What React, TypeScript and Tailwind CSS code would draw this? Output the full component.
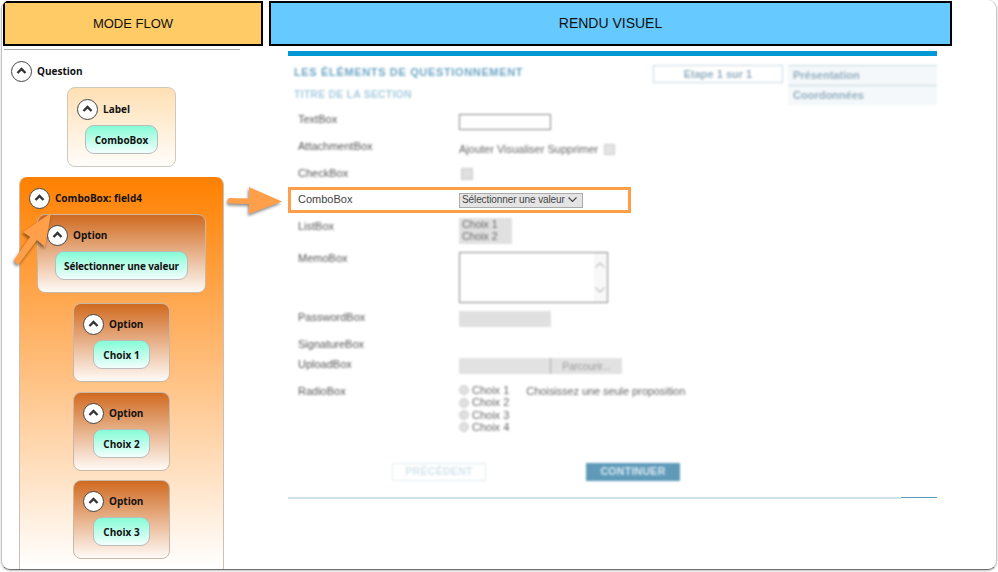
import React from 'react';

const nodeFont = { fontFamily: '"Open Sans", "Noto Sans", sans-serif' };

function Toggle() {
  return (
    <div className="flex h-[21px] w-[21px] shrink-0 items-center justify-center rounded-full border-[1.5px] border-[#444] bg-white">
      <svg width="11" height="8" viewBox="0 0 11 8">
        <path d="M1.5 6 L5.5 2 L9.5 6" fill="none" stroke="#333" strokeWidth="2.4" />
      </svg>
    </div>
  );
}

function NodeHead({ label }: { label: string }) {
  return (
    <div className="flex h-[22px] items-center gap-[5px]">
      <Toggle />
      <span className="text-[10px] font-bold text-[#111]">{label}</span>
    </div>
  );
}

function Pill({ label, w }: { label: string; w: string }) {
  return (
    <div className={`flex h-[29px] items-center justify-center rounded-[9px] border border-[#bbb] bg-linear-to-b/srgb from-[#85fcd6] to-[#f2fffc] pt-[2px] text-[10px] font-bold text-[#111] ${w}`}>
      {label}
    </div>
  );
}

function OptionCard({ label, mt }: { label: string; mt: string }) {
  return (
    <div className={`flex h-[79px] w-[97px] flex-col rounded-[8px] border border-[#c8b8a8] bg-linear-to-b/srgb from-[#d06a20] to-[#fffaf6] px-[9px] pt-[9px] ${mt}`}>
      <NodeHead label="Option" />
      <div className="mt-[5px] flex justify-center">
        <Pill label={label} w="w-[57px]" />
      </div>
    </div>
  );
}

function Row({ h, label, ctrlMt, children }: { h: string; label: string; ctrlMt: string; children?: React.ReactNode }) {
  return (
    <div className={`flex blur-[1.2px] ${h}`}>
      <div className="w-[171px] pl-[10px] text-[11px] leading-[14px] text-[#555]">{label}</div>
      <div className={ctrlMt}>{children}</div>
    </div>
  );
}

function Radio({ label }: { label: string }) {
  return (
    <div className="flex h-[12.4px] items-center gap-[3px] text-[11px] text-[#666]">
      <span className="h-[10px] w-[10px] rounded-full border border-[#ccc] bg-[#e0e0e0]" />
      {label}
    </div>
  );
}

export default function App() {
  return (
    <div className="relative h-[572px] w-[998px] overflow-hidden bg-white" style={{ fontFamily: '"Liberation Sans", Arial, sans-serif' }}>
      <div className="ml-[1px] h-[570px] w-[996px] overflow-hidden rounded-[9px] border-x border-b border-x-[#c4c4c4] border-b-[#707070] pt-[1px] shadow-[0_1px_2px_rgba(0,0,0,0.25)]">
        {/* Column titles */}
        <div className="ml-[1px] flex gap-[6px]">
          <div className="flex h-[45px] w-[260px] items-center justify-center border-2 border-black bg-[#ffcb66] text-[13px] text-[#111]">
            MODE FLOW
          </div>
          <div className="flex h-[45px] w-[683px] items-center justify-center border-2 border-black bg-[#66c9ff] pb-[1px] text-[14px] text-[#111]">
            RENDU VISUEL
          </div>
        </div>

        <div className="flex">
          {/* Flow tree */}
          <div className="ml-[2px] w-[236px] shrink-0" style={nodeFont}>
            <div className="mt-[3px] h-[11px] border-t border-[#aaa]" />
            <div className="ml-[7px]">
              <NodeHead label="Question" />
            </div>
            <div className="ml-[15px] mt-[5px] flex w-[205px] flex-col items-center">
              <div className="flex h-[80px] w-[109px] flex-col rounded-[8px] border border-[#cfc8bc] bg-linear-to-b/srgb from-[#ffe0b4] to-[#fffdfa] px-[9px] pt-[10px]">
                <NodeHead label="Label" />
                <div className="mt-[5px] flex justify-center">
                  <Pill label="ComboBox" w="w-[73px]" />
                </div>
              </div>
              <div className="mt-[10px] flex h-[400px] w-[205px] flex-col items-center rounded-t-[8px] border border-[#c9c0b6] border-t-0 bg-linear-to-b/srgb from-[#ff8000] to-white to-[98%] pt-[10px]">
                <div className="w-full pl-[9px]">
                  <NodeHead label="ComboBox: field4" />
                </div>
                <div className="mt-[5px] flex h-[79px] w-[169px] flex-col rounded-[8px] border border-[#c8b8a8] bg-linear-to-b/srgb from-[#d06a20] to-[#fffaf6] px-[9px] pt-[9px]">
                  <NodeHead label="Option" />
                  <div className="mt-[5px] flex justify-center tracking-[-0.17px]">
                    <Pill label="Sélectionner une valeur" w="w-[133px]" />
                  </div>
                </div>
                <OptionCard label="Choix 1" mt="mt-[10px]" />
                <OptionCard label="Choix 2" mt="mt-[10px]" />
                <OptionCard label="Choix 3" mt="mt-[9px]" />
              </div>
            </div>
          </div>

          {/* Visual rendering */}
          <div className="ml-[48px] w-[649px] shrink-0">
            <div className="mt-[5px] h-[5px] bg-[#0099d4]" />
            <div className="flex h-[56px] items-start pt-[9px] blur-[1.2px]">
              <div className="w-[365px] pl-[6px]">
                <div className="text-[11px] font-bold leading-[14px] tracking-[0.65px] text-[#6ea6c4]">LES ÉLÉMENTS DE QUESTIONNEMENT</div>
                <div className="mt-[8px] text-[10.5px] font-bold leading-[14px] tracking-[0.2px] text-[#a9cde0]">TITRE DE LA SECTION</div>
              </div>
              <div className="flex h-[18px] w-[130px] items-center justify-center border border-[#c8dae4] text-[11px] font-bold text-[#94aebf]">Etape 1 sur 1</div>
              <div className="ml-[5px] w-[149px] text-[11px] font-bold text-[#94aebf]">
                <div className="flex h-[21px] items-center border-b border-t border-[#c8dae4] bg-[#f4f8fa] pl-[5px]">Présentation</div>
                <div className="flex h-[19px] items-center bg-[#f4f8fa] pl-[5px]">Coordonnées</div>
              </div>
            </div>

            <Row h="h-[27px]" label="TextBox" ctrlMt="mt-[2px]">
              <div className="h-[16px] w-[92px] border border-[#888]" />
            </Row>
            <Row h="h-[27px]" label="AttachmentBox" ctrlMt="mt-[3px]">
              <div className="flex items-center gap-[6px] text-[11px] leading-[14px] text-[#666]">
                Ajouter Visualiser Supprimer
                <span className="h-[11px] w-[11px] border border-[#ccc] bg-[#e4e4e4]" />
              </div>
            </Row>
            <Row h="h-[21px]" label="CheckBox" ctrlMt="mt-[2px] ml-[2px]">
              <div className="h-[12px] w-[12px] border border-[#ccc] bg-[#e0e0e0]" />
            </Row>

            {/* Highlighted row stays sharp */}
            <div className="flex h-[26px] w-[343px] items-center border-[3px] border-[#ff9f4a]">
              <div className="w-[168px] pb-[2px] pl-[7px] text-[11px] text-[#444]">ComboBox</div>
              <div className="flex h-[15px] w-[124px] items-center justify-between border border-[#aaa] bg-[#e4e4e4] pb-[1px] pl-[2px] pr-[5px] text-[10px] tracking-[-0.1px] text-[#444]">
                Sélectionner une valeur
                <svg width="9" height="6" viewBox="0 0 9 6">
                  <path d="M0.5 0.5 L4.5 4.5 L8.5 0.5" fill="none" stroke="#444" strokeWidth="1.1" />
                </svg>
              </div>
            </div>

            <div className="h-[6px]" />
            <Row h="h-[32px]" label="ListBox" ctrlMt="-mt-[1px]">
              <div className="h-[26px] w-[53px] bg-[#e0e0e0] pl-[3px] text-[10.5px] leading-[12px] text-[#666]">
                Choix 1
                <br />
                Choix 2
              </div>
            </Row>
            <Row h="h-[59px]" label="MemoBox" ctrlMt="mt-[1px]">
              <div className="flex h-[51px] w-[149px] justify-end border border-[#888] pr-[1px]">
                <div className="flex w-[12px] flex-col items-center justify-between bg-[#f8f8f8] py-[9px]">
                  <svg width="10" height="6" viewBox="0 0 10 6"><path d="M0.5 5.5 L5 1 L9.5 5.5" fill="none" stroke="#999" /></svg>
                  <svg width="10" height="6" viewBox="0 0 10 6"><path d="M0.5 0.5 L5 5 L9.5 0.5" fill="none" stroke="#999" /></svg>
                </div>
              </div>
            </Row>
            <Row h="h-[27px]" label="PasswordBox" ctrlMt="mt-[1px]">
              <div className="h-[16px] w-[92px] bg-[#e0e0e0]" />
            </Row>
            <Row h="h-[20px]" label="SignatureBox" ctrlMt="" />
            <Row h="h-[27px]" label="UploadBox" ctrlMt="mt-[1px]">
              <div className="flex h-[16px] w-[163px] bg-[#e2e2e2]">
                <div className="w-[92px] border-r border-[#aaa]" />
                <div className="flex flex-1 items-center justify-center text-[10px] text-[#999]">Parcourir...</div>
              </div>
            </Row>
            <Row h="h-[72px]" label="RadioBox" ctrlMt="">
              <div className="flex gap-[17px]">
                <div>
                  <Radio label="Choix 1" />
                  <Radio label="Choix 2" />
                  <Radio label="Choix 3" />
                  <Radio label="Choix 4" />
                </div>
                <div className="text-[11px] leading-[14px] tracking-[-0.06px] text-[#666]">Choisissez une seule proposition</div>
              </div>
            </Row>

            <div className="mt-[7px] flex h-[18px] gap-[100px] pl-[104px] blur-[1px]">
              <div className="flex w-[94px] items-center justify-center border border-[#e0ecf2] text-[10.5px] font-bold tracking-[0.3px] text-[#d4e4ec]">PRÉCÉDENT</div>
              <div className="flex w-[94px] items-center justify-center bg-[#5f9ab8] text-[10.5px] font-bold tracking-[0.3px] text-[#dcebf2]">CONTINUER</div>
            </div>

            <div className="mt-[16px] flex items-start">
              <div className="h-[2px] w-[613px] bg-[#cfe2ec]" />
              <div className="h-[1px] flex-1 bg-[#5f9ab8]" />
            </div>
          </div>
        </div>
      </div>

      {/* Callout arrows */}
      <svg className="absolute left-0 top-0" width="300" height="290" viewBox="0 0 300 290" style={{ filter: 'drop-shadow(-1px 2px 1.5px rgba(0,0,0,0.45))' }}>
        <path d="M229 198 L249 198.5 L249 187 L282 201.5 L249 214 L249 204 L229 203.5 Q226 201 229 198 Z" fill="#ff9f4a" />
        <path d="M51 213 L45 247 L37 240 L19 264 Q16 265 14 260 L30 237 L23 232 Z" fill="#ff9f4a" />
      </svg>
    </div>
  );
}
